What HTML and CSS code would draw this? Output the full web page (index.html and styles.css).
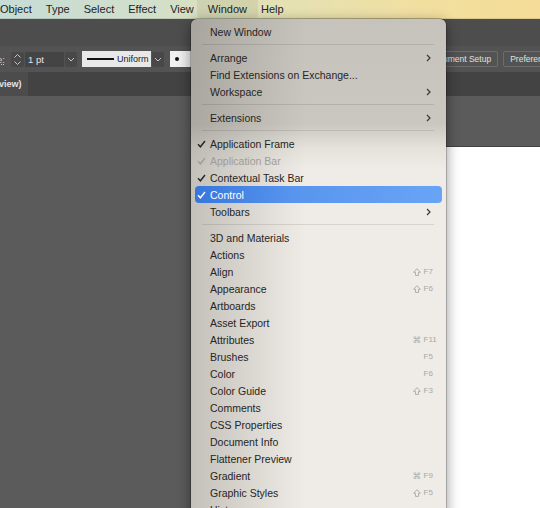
FILE: index.html
```html
<!DOCTYPE html>
<html lang="en">
<head>
    <meta charset="UTF-8">
    <meta name="viewport" content="width=device-width, initial-scale=1.0">
    <title>Illustrator - Window menu</title>
    <link rel="stylesheet" href="styles.css">
</head>
<body>
    <div class="menubar">
        <span class="menubar-item first">Object</span>
        <span class="menubar-item">Type</span>
        <span class="menubar-item">Select</span>
        <span class="menubar-item">Effect</span>
        <span class="menubar-item">View</span>
        <span class="menubar-item active">Window</span>
        <span class="menubar-item">Help</span>
    </div>

    <div class="app">
        <div class="app-bar"></div>
        <div class="control-bar">
            <span class="label">e:</span>
            <div class="spinner">
                <svg width="9" height="13" viewBox="0 0 9 13"><polyline points="1.5,4.5 4.5,1.5 7.5,4.5" /><polyline points="1.5,8.5 4.5,11.5 7.5,8.5" /></svg>
            </div>
            <div class="field">1 pt</div>
            <div class="drop">
                <svg width="8" height="5" viewBox="0 0 8 5"><polyline points="1,1 4,4 7,1" /></svg>
            </div>
            <div class="profile"><span class="profile-line"></span>Uniform</div>
            <div class="drop">
                <svg width="8" height="5" viewBox="0 0 8 5"><polyline points="1,1 4,4 7,1" /></svg>
            </div>
            <div class="brush"><span class="dot"></span></div>
            <div class="control-buttons">
                <span class="btn">Document Setup</span>
                <span class="btn">Preferences</span>
            </div>
        </div>
        <div class="tab-bar">
            <div class="tab">view)</div>
        </div>
        <div class="canvas">
            <div class="artboard"></div>
        </div>
    </div>

    <!-- Window dropdown -->
    <div class="dropdown">
        <div class="item">New Window</div>
        <div class="sep"></div>
        <div class="item">Arrange <svg class="arrow" width="5" height="8" viewBox="0 0 5 8"><polyline points="1,1 4,4 1,7" /></svg></div>
        <div class="item">Find Extensions on Exchange...</div>
        <div class="item">Workspace <svg class="arrow" width="5" height="8" viewBox="0 0 5 8"><polyline points="1,1 4,4 1,7" /></svg></div>
        <div class="sep"></div>
        <div class="item">Extensions <svg class="arrow" width="5" height="8" viewBox="0 0 5 8"><polyline points="1,1 4,4 1,7" /></svg></div>
        <div class="sep"></div>
        <div class="item"><svg class="check" width="9" height="8" viewBox="0 0 9 8"><polyline points="1,4.2 3.4,6.8 8,1" /></svg>Application Frame</div>
        <div class="item disabled"><svg class="check" width="9" height="8" viewBox="0 0 9 8"><polyline points="1,4.2 3.4,6.8 8,1" /></svg>Application Bar</div>
        <div class="item"><svg class="check" width="9" height="8" viewBox="0 0 9 8"><polyline points="1,4.2 3.4,6.8 8,1" /></svg>Contextual Task Bar</div>
        <div class="item selected"><svg class="check" width="9" height="8" viewBox="0 0 9 8"><polyline points="1,4.2 3.4,6.8 8,1" /></svg>Control</div>
        <div class="item">Toolbars <svg class="arrow" width="5" height="8" viewBox="0 0 5 8"><polyline points="1,1 4,4 1,7" /></svg></div>
        <div class="sep"></div>
        <div class="item">3D and Materials</div>
        <div class="item">Actions</div>
        <div class="item">Align <span class="keys"><svg class="mod" width="8" height="8" viewBox="0 0 8 8"><path d="M4 0.7 L7.4 4.3 H5.5 V7.4 H2.5 V4.3 H0.6 Z" /></svg><span class="key">F7</span></span></div>
        <div class="item">Appearance <span class="keys"><svg class="mod" width="8" height="8" viewBox="0 0 8 8"><path d="M4 0.7 L7.4 4.3 H5.5 V7.4 H2.5 V4.3 H0.6 Z" /></svg><span class="key">F6</span></span></div>
        <div class="item">Artboards</div>
        <div class="item">Asset Export</div>
        <div class="item">Attributes <span class="keys"><span class="mod cmd">⌘</span><span class="key">F11</span></span></div>
        <div class="item">Brushes <span class="keys"><span class="mod"></span><span class="key">F5</span></span></div>
        <div class="item">Color <span class="keys"><span class="mod"></span><span class="key">F6</span></span></div>
        <div class="item">Color Guide <span class="keys"><svg class="mod" width="8" height="8" viewBox="0 0 8 8"><path d="M4 0.7 L7.4 4.3 H5.5 V7.4 H2.5 V4.3 H0.6 Z" /></svg><span class="key">F3</span></span></div>
        <div class="item">Comments</div>
        <div class="item">CSS Properties</div>
        <div class="item">Document Info</div>
        <div class="item">Flattener Preview</div>
        <div class="item">Gradient <span class="keys"><span class="mod cmd">⌘</span><span class="key">F9</span></span></div>
        <div class="item">Graphic Styles <span class="keys"><svg class="mod" width="8" height="8" viewBox="0 0 8 8"><path d="M4 0.7 L7.4 4.3 H5.5 V7.4 H2.5 V4.3 H0.6 Z" /></svg><span class="key">F5</span></span></div>
        <div class="item">History</div>
    </div>
</body>
</html>
```

FILE: styles.css
```css
body {
    margin: 0;
    width: 540px;
    height: 508px;
    overflow: hidden;
    position: relative;
    font-family: "Liberation Sans", Arial, sans-serif;
    background: #5d5d5d;
    display: flex;
    flex-direction: column;
}

/* macOS menu bar */
.menubar {
    height: 18px;
    display: flex;
    align-items: stretch;
    background: linear-gradient(to right, #c6dcd6 0%, #d2dfcb 28%, #e6e1b1 55%, #f2df9f 80%, #f5dc98 100%);
    border-bottom: 1px solid rgba(0,0,0,0.1);
    font-size: 11px;
    color: #232323;
    flex-shrink: 0;
}
.menubar-item {
    display: flex;
    align-items: center;
    padding: 0 7px;
}
.menubar-item.first {
    margin-left: -7px;
}
.menubar-item.active {
    padding: 0 11px;
    margin: 0 -4px;
    background: rgba(90,80,20,0.09);
    border-radius: 0 0 4px 4px;
}

/* app chrome */
.app {
    flex: 1;
    display: flex;
    flex-direction: column;
}
.app-bar {
    height: 27px;
    background: #4d4d4d;
}
.control-bar {
    height: 26px;
    background: #535353;
    display: flex;
    align-items: center;
    gap: 1px;
    font-size: 9.5px;
    color: #ddd;
}
.label {
    width: 12px;
    margin-left: -3px;
    color: #ccc;
    text-decoration: underline dotted;
}
.spinner, .drop {
    height: 15px;
    background: #484848;
    border-radius: 2px;
    display: flex;
    align-items: center;
    justify-content: center;
}
.spinner {
    width: 13px;
    margin-left: 1px;
}
.drop {
    width: 12px;
}
.spinner svg polyline, .drop svg polyline {
    fill: none;
    stroke: #c4c4c4;
    stroke-width: 1;
}
.field {
    width: 36px;
    height: 15px;
    line-height: 15px;
    padding-left: 3px;
    background: #444;
    color: #e4e4e4;
}
.profile {
    margin-left: 4px;
    width: 64px;
    height: 16px;
    padding-left: 5px;
    background: #e8e8e8;
    color: #222;
    font-size: 9px;
    display: flex;
    align-items: center;
    gap: 3px;
}
.profile-line {
    width: 27px;
    height: 1.5px;
    background: #111;
}
.brush {
    margin-left: 5px;
    width: 22px;
    height: 16px;
    background: #f0f0f0;
    display: flex;
    align-items: center;
}
.dot {
    width: 4px;
    height: 4px;
    margin-left: 5px;
    border-radius: 50%;
    background: #111;
}
.control-buttons {
    margin-left: auto;
    margin-right: -23px;
    display: flex;
    gap: 5px;
}
.btn {
    height: 14px;
    line-height: 14px;
    padding: 0 6px;
    border: 1px solid #6c6c6c;
    border-radius: 2px;
    font-size: 8.5px;
    color: #e0e0e0;
    white-space: nowrap;
}
.tab-bar {
    height: 24px;
    background: #434343;
    display: flex;
}
.tab {
    width: 28px;
    background: #4c4c4c;
    color: #e2e2e2;
    font-size: 9px;
    font-weight: bold;
    line-height: 24px;
    text-indent: -1px;
}
.canvas {
    flex: 1;
    background: #5b5b5b;
    padding-top: 50px;
}
.artboard {
    margin-left: 300px;
    height: 400px;
    background: #fff;
    border-top: 1px solid #404040;
}

/* dropdown menu */
.dropdown {
    position: absolute;
    left: 191px;
    top: 19px;
    width: 255px;
    height: 500px;
    padding-top: 4px;
    box-sizing: border-box;
    border-radius: 6px 6px 0 0;
    box-shadow: 0 0 0 0.5px rgba(0,0,0,0.35), 0 4px 14px rgba(0,0,0,0.45);
    background:
        linear-gradient(to right, rgba(105,100,92,0.32) 0, rgba(115,110,102,0.18) 55px, rgba(120,115,108,0.06) 95px, rgba(120,115,108,0) 115px),
        linear-gradient(to bottom, #c6c3bd 0, #cac7c1 105px, #e4e1db 128px, #efece7 150px);
    font-size: 10.5px;
    color: #262522;
}
.item {
    position: relative;
    height: 17px;
    margin: 0 4.5px 0 4px;
    padding-left: 15px;
    display: flex;
    align-items: center;
    border-radius: 4px;
    white-space: nowrap;
}
.item.disabled {
    color: #a09d98;
}
.item.selected {
    background: linear-gradient(to right, #3876dc 0%, #5895ee 40%, #68a4f6 100%);
    color: #fff;
}
.check {
    position: absolute;
    left: 2px;
    top: 5px;
}
.check polyline {
    fill: none;
    stroke: currentColor;
    stroke-width: 1.4;
}
.arrow {
    margin-left: auto;
    margin-right: 11px;
}
.arrow polyline {
    fill: none;
    stroke: #3a3935;
    stroke-width: 1.2;
}
.keys {
    margin-left: auto;
    width: 29px;
    display: flex;
    align-items: center;
    color: #aaa7a2;
    font-size: 8px;
}
.mod {
    width: 11px;
    flex-shrink: 0;
}
svg.mod {
    width: 8px;
    margin-right: 3px;
}
svg.mod path {
    fill: none;
    stroke: #aaa7a2;
    stroke-width: 0.9;
    stroke-linejoin: round;
}
.mod.cmd {
    font-family: "DejaVu Sans", sans-serif;
    font-size: 8.5px;
}
.sep {
    height: 9px;
    display: flex;
    align-items: center;
    margin: 0 12px 0 11px;
}
.sep::before {
    content: "";
    flex: 1;
    height: 1px;
    background: rgba(0,0,0,0.1);
}
```
